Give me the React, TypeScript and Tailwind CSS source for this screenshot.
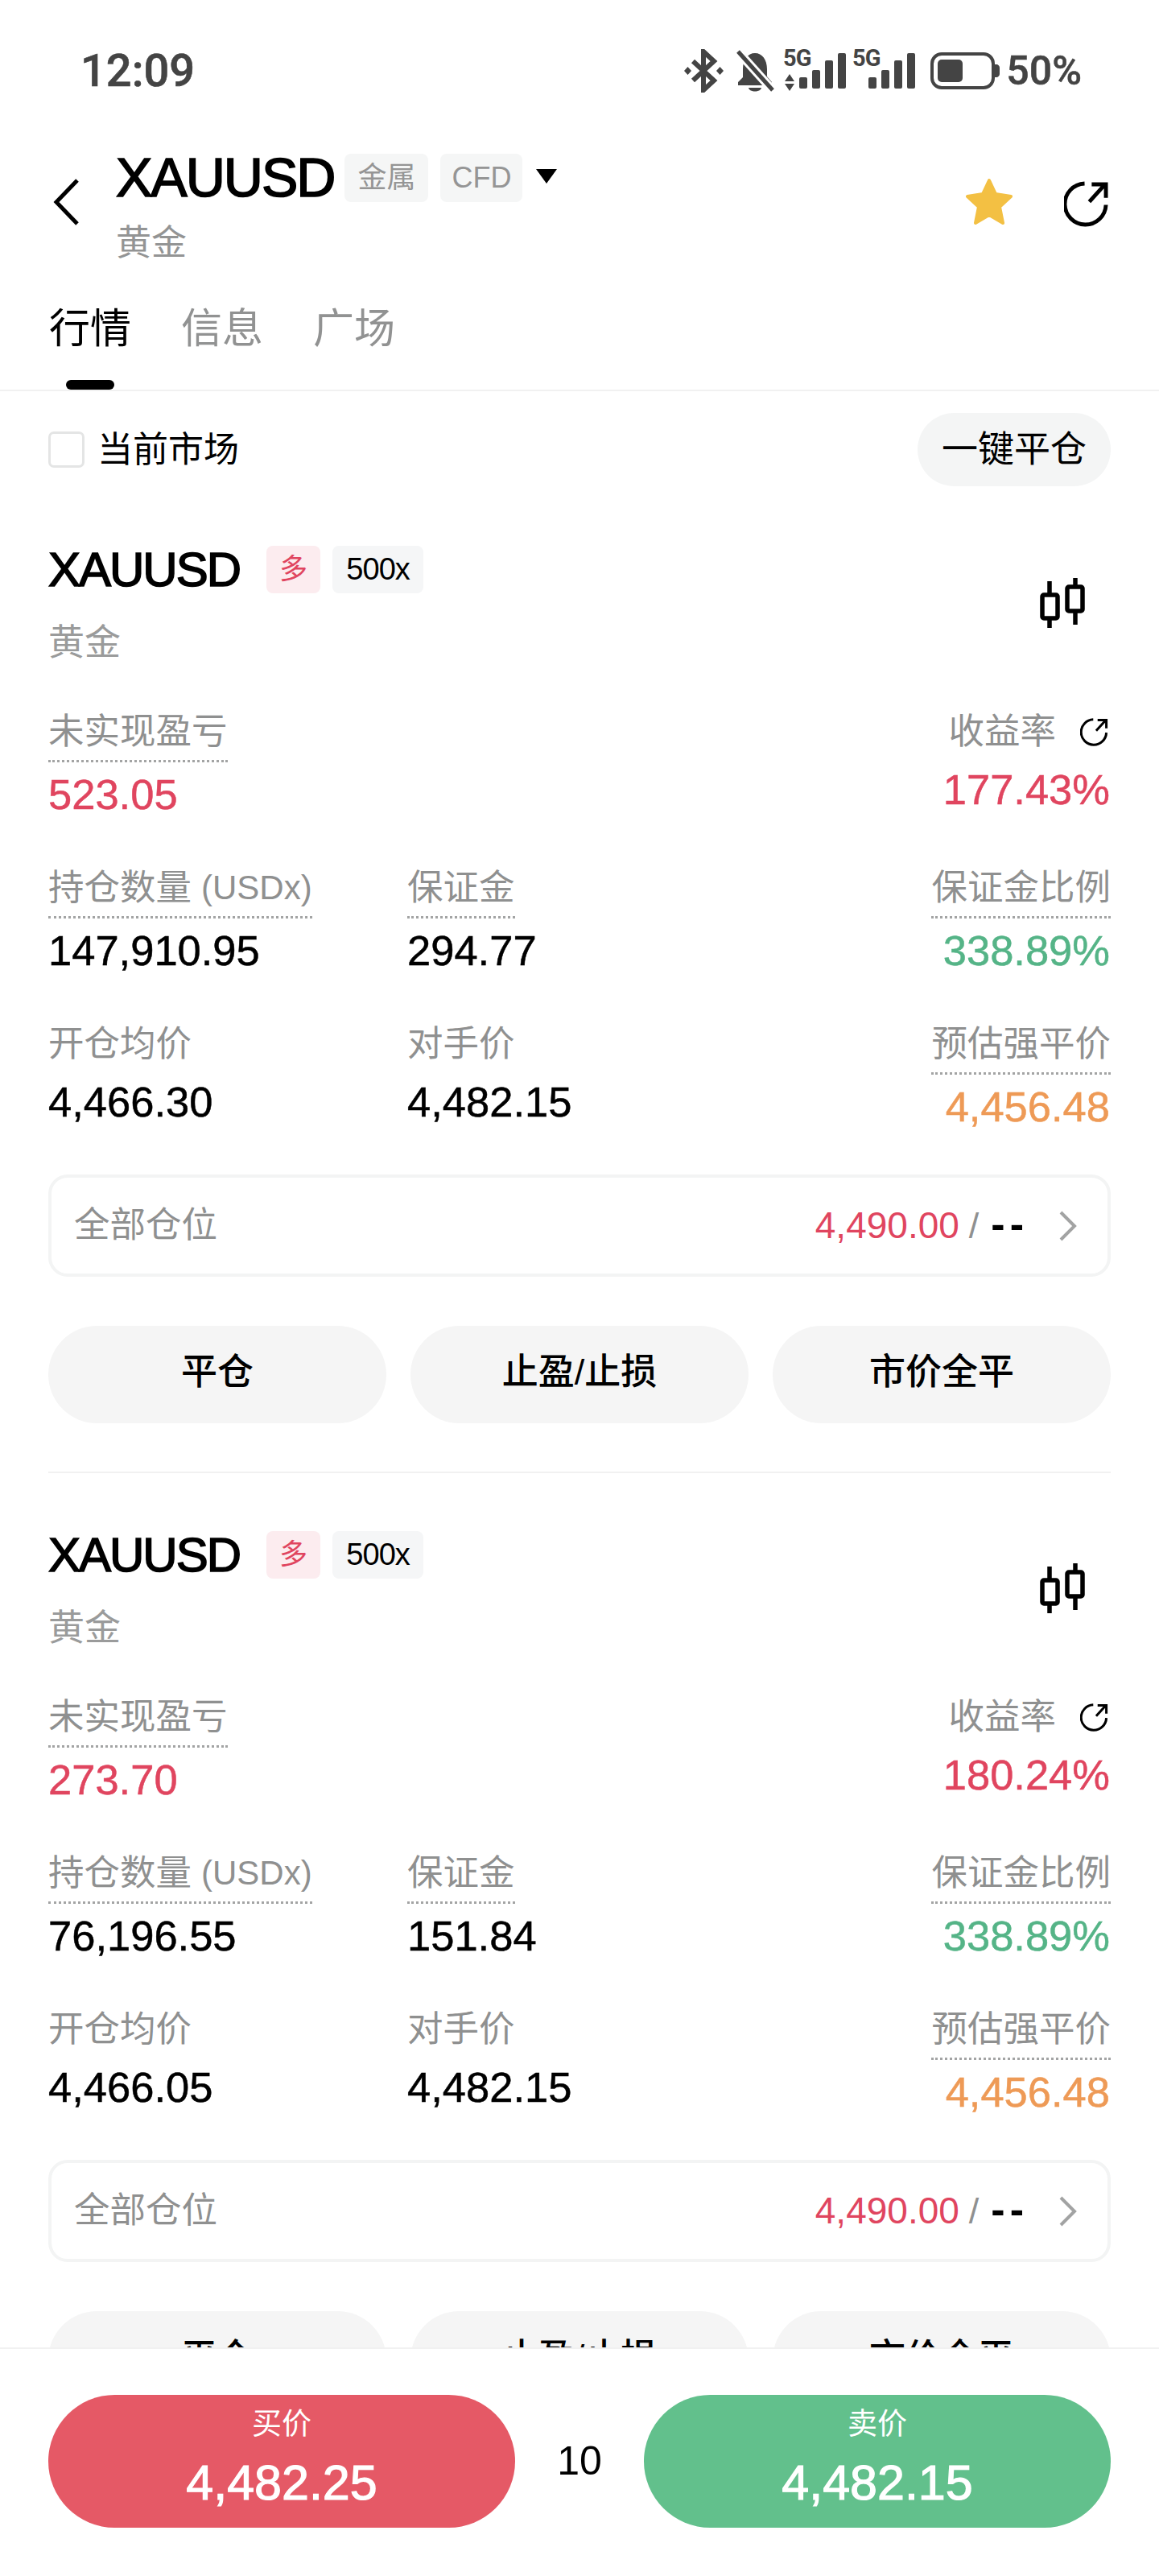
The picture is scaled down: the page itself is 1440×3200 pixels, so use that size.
import React from 'react';

const Share = ({ className }: { className: string }) => (
  <svg viewBox="0 0 56 58" className={className} fill="none" stroke="currentColor" strokeWidth="5">
    <path d="M26 3A26 26 0 1 0 53 30" />
    <path d="M32 26L52 4M35 4H53V21" />
  </svg>
);

const Candle = () => (
  <svg viewBox="0 0 56 62" className="w-[56px] h-[62px] text-black" fill="none" stroke="currentColor" strokeWidth="5.5">
    <path d="M12 4V21M12 50V62M44 0V11M44 41V58" />
    <rect x="3" y="21" width="19" height="29" rx="2" />
    <rect x="34" y="11" width="19" height="30" rx="2" />
  </svg>
);

const Signal = ({ arrows }: { arrows?: boolean }) => (
  <svg viewBox="0 0 78 54" className="w-[78px] h-[54px] overflow-visible" fill="#444444">
    <text x="0" y="21" fontFamily="Roboto, sans-serif" fontWeight="700" fontSize="29" letterSpacing="-1">
      5G
    </text>
    {arrows && <path d="M8 31L14 40H2ZM8 52L14 43H2Z" />}
    <rect x="20" y="35" width="10" height="14" rx="2" />
    <rect x="36" y="26" width="10" height="23" rx="2" />
    <rect x="52" y="14" width="10" height="35" rx="2" />
    <rect x="68" y="5" width="10" height="44" rx="2" />
  </svg>
);

const StatusBar = () => (
  <div className="h-[176px] pl-[100px] pr-[96px] flex items-center justify-between font-['Roboto',sans-serif] text-[#444444] font-medium">
    <span className="text-[56px] leading-none [-webkit-text-stroke:0.6px]">12:09</span>
    <div className="flex items-center">
      <svg viewBox="0 0 49 54" className="w-[49px] h-[54px]" fill="none" stroke="#444444" strokeWidth="6">
        <path d="M11 15L37 39L24 51V3L37 15L11 39" />
        <path d="M4.5 22L9 27L4.5 32L0 27ZM44.5 22L49 27L44.5 32L40 27Z" fill="#444444" stroke="none" />
      </svg>
      <svg viewBox="0 0 48 52" className="w-[48px] h-[52px] ml-[15px]">
        <path d="M24 4C33 4 39 12 39 24V33L45 40V44H3V40L9 34V24C9 12 15 4 24 4Z" fill="#444444" />
        <path d="M16 47H32C31 53 17 53 16 47Z" fill="#444444" />
        <path d="M3 2L46 50" stroke="#ffffff" strokeWidth="11" />
        <path d="M3 2L46 50" stroke="#444444" strokeWidth="5" />
      </svg>
      <div className="ml-[11px]">
        <Signal arrows />
      </div>
      <div className="ml-[8px]">
        <Signal />
      </div>
      <svg viewBox="0 0 86 46" className="w-[86px] h-[46px] ml-[19px]">
        <rect x="2" y="2" width="76" height="42" rx="12" fill="none" stroke="#444444" strokeWidth="4" />
        <rect x="9" y="9" width="31" height="28" rx="5" fill="#444444" />
        <path d="M80 15H82C84 15 86 17 86 19V27C86 29 84 31 82 31H80Z" fill="#444444" />
      </svg>
      <span className="ml-[8px] text-[50px] leading-none [-webkit-text-stroke:0.5px]">50%</span>
    </div>
  </div>
);

const NavBar = () => (
  <div className="h-[154px] pt-[15px] px-[60px] flex items-start">
    <svg viewBox="0 0 32 58" className="w-[32px] h-[58px] mt-[31px] ml-[6px] mr-[46px]" fill="none" stroke="#000000" strokeWidth="5">
      <path d="M30 2L4 29L30 56" />
    </svg>
    <div className="flex-1">
      <div className="flex items-center h-[60px]">
        <span className="mb-[3px] text-[68px] leading-none tracking-[-2px] [-webkit-text-stroke:1.7px] text-black">XAUUSD</span>
        <span className="ml-[13px] w-[104px] h-[60px] rounded-[8px] bg-[#f5f6f6] text-[#959595] text-[36px] flex items-center justify-center">金属</span>
        <span className="ml-[15px] w-[102px] h-[60px] rounded-[8px] bg-[#f5f6f6] text-[#959595] text-[36px] flex items-center justify-center">CFD</span>
        <svg viewBox="0 0 26 18" className="w-[26px] h-[18px] ml-[17px] mb-[4px]">
          <path d="M0 0H26L13 18Z" fill="#000000" />
        </svg>
      </div>
      <div className="mt-[21px] text-[44px] leading-[60px] text-[#939494]">黄金</div>
    </div>
    <svg viewBox="0 0 62 61" className="w-[62px] h-[61px] mt-[29px]">
      <path d="M31 4L39 21L58 24L44 37L48 57L31 47L14 57L18 37L4 24L23 21Z" fill="#f3c043" stroke="#f3c043" strokeWidth="4" strokeLinejoin="round" />
    </svg>
    <Share className="w-[55px] h-[57px] ml-[62px] mt-[34px] mr-[3px] text-black" />
  </div>
);

const Tabs = () => (
  <div className="h-[156px] pt-[44px] pl-[61px] flex gap-[62px] border-b-2 border-[#f1f1f1] items-start">
    {['行情', '信息', '广场'].map((t, i) => (
      <div key={t} className="flex flex-col items-center">
        <span className={`text-[51px] leading-[70px] ${i === 0 ? 'text-black' : 'text-[#919292]'}`}>{t}</span>
        {i === 0 && <div className="mt-[28px] w-[60px] h-[12px] rounded-full bg-black" />}
      </div>
    ))}
  </div>
);

const Toolbar = () => (
  <div className="pt-[27px] px-[60px] pb-[2px] flex items-center justify-between">
    <div className="flex items-center">
      <div className="w-[45px] h-[45px] rounded-[7px] border-[3px] border-[#e4e5e5] bg-white" />
      <span className="ml-[16px] text-[44px] text-black">当前市场</span>
    </div>
    <div className="w-[240px] h-[91px] rounded-full bg-[#f4f5f5] flex items-center justify-center text-[45px] text-black">一键平仓</div>
  </div>
);

type MetricProps = {
  label: React.ReactNode;
  value: string;
  color?: string;
  dotted?: boolean;
  right?: boolean;
  icon?: boolean;
};

const Metric = ({ label, value, color = 'text-black', dotted, right, icon }: MetricProps) => (
  <div className={`flex flex-col ${right ? 'items-end' : 'items-start'}`}>
    <div className={`text-[44.5px] leading-[60px] text-[#8f9090] flex items-center ${dotted ? 'pb-[5px] border-b-[3px] border-dotted border-[#a3a4a4] mb-[10px]' : 'mb-[12px]'}`}>
      {label}
      {icon && <Share className="w-[35px] h-[35px] ml-[30px] mr-[3px] text-black" />}
    </div>
    <div className={`text-[52.5px] leading-[60px] [-webkit-text-stroke:0.5px] ${right ? 'mr-[1px]' : ''} ${color}`}>{value}</div>
  </div>
);

type Pos = {
  pnl: string;
  roe: string;
  size: string;
  margin: string;
  entry: string;
};

const Position = ({ p, last }: { p: Pos; last?: boolean }) => (
  <div className={`pt-[72px] pb-[60px] mx-[60px] ${last ? '' : 'border-b-2 border-[#f1f1f1]'}`}>
    <div className="flex items-center justify-between">
      <div>
        <div className="flex items-center h-[59px]">
          <span className="text-[60px] leading-none tracking-[-2px] [-webkit-text-stroke:1.6px] text-black">XAUUSD</span>
          <span className="ml-[33px] w-[67px] h-[59px] rounded-[8px] bg-[#fcecef] text-[#e0455f] text-[35px] flex items-center justify-center">多</span>
          <span className="ml-[15px] w-[113px] h-[59px] rounded-[8px] bg-[#f5f6f7] text-black text-[38px] tracking-[-1px] flex items-center justify-center">500x</span>
        </div>
        <div className="mt-[32px] text-[45px] leading-[60px] text-[#9a9b9b]">黄金</div>
      </div>
      <div className="mb-[10px] mr-[32px]">
        <Candle />
      </div>
    </div>
    <div className="mt-[50px] grid grid-cols-[446px_1fr_auto] gap-y-[56px]">
      <Metric label="未实现盈亏" value={p.pnl} color="text-[#e0455f]" dotted />
      <div />
      <Metric label="收益率" value={p.roe} color="text-[#e0455f]" right icon />
      <Metric
        label={
          <>
            持仓数量<span className="ml-[12px] text-[42px]">(USDx)</span>
          </>
        }
        value={p.size}
        dotted
      />
      <Metric label="保证金" value={p.margin} dotted />
      <Metric label="保证金比例" value="338.89%" color="text-[#55b487]" dotted right />
      <Metric label="开仓均价" value={p.entry} />
      <Metric label="对手价" value="4,482.15" />
      <Metric label="预估强平价" value="4,456.48" color="text-[#ee9a56]" dotted right />
    </div>
    <div className="mt-[54px] h-[127px] rounded-[24px] border-[4px] border-[#f3f4f4] pl-[28px] pr-[38px] flex items-center justify-between">
      <span className="text-[44.5px] text-[#8f9090]">全部仓位</span>
      <div className="flex items-center">
        <span className="text-[46px] text-[#e0455f]">4,490.00</span>
        <span className="ml-[12px] text-[45px] text-[#8f9090]">/</span>
        <span className="ml-[15px] mr-[38px] mb-[5px] text-[52px] leading-[52px] font-bold text-black tracking-[6px]">--</span>
        <svg viewBox="0 0 22 38" className="w-[22px] h-[38px]" fill="none" stroke="#a2a3a3" strokeWidth="4">
          <path d="M2 2L19 19L2 36" />
        </svg>
      </div>
    </div>
    <div className="mt-[61px] grid grid-cols-3 gap-[30px]">
      {['平仓', '止盈/止损', '市价全平'].map((t) => (
        <div key={t} className="h-[121px] pb-[5px] rounded-full bg-[#f5f5f5] flex items-center justify-center text-[45px] font-medium text-black">
          {t}
        </div>
      ))}
    </div>
  </div>
);

const TradeBar = () => (
  <div className="h-[284px] shrink-0 border-t-2 border-[#f1f1f1] bg-white px-[60px] pt-[57px] flex items-start justify-between">
    <div className="w-[580px] h-[165px] rounded-full bg-[#e55966] text-white flex flex-col items-center">
      <span className="mt-[16px] text-[37px] leading-[42px]">买价</span>
      <span className="mt-[16px] text-[61px] leading-[70px] [-webkit-text-stroke:1.2px]">4,482.25</span>
    </div>
    <span className="mt-[47px] text-[50px] leading-[70px] text-black">10</span>
    <div className="w-[580px] h-[165px] rounded-full bg-[#62c08c] text-white flex flex-col items-center">
      <span className="mt-[16px] text-[37px] leading-[42px]">卖价</span>
      <span className="mt-[16px] text-[61px] leading-[70px] [-webkit-text-stroke:1.2px]">4,482.15</span>
    </div>
  </div>
);

const positions: Pos[] = [
  { pnl: '523.05', roe: '177.43%', size: '147,910.95', margin: '294.77', entry: '4,466.30' },
  { pnl: '273.70', roe: '180.24%', size: '76,196.55', margin: '151.84', entry: '4,466.05' },
];

export default function App() {
  return (
    <div className="w-[1440px] h-[3200px] bg-white flex flex-col overflow-hidden font-['Liberation_Sans','Noto_Sans_CJK_SC',sans-serif]">
      <StatusBar />
      <NavBar />
      <Tabs />
      <div className="flex-1 min-h-0 overflow-hidden">
        <Toolbar />
        {positions.map((p, i) => (
          <Position key={p.entry} p={p} last={i === positions.length - 1} />
        ))}
      </div>
      <TradeBar />
    </div>
  );
}
